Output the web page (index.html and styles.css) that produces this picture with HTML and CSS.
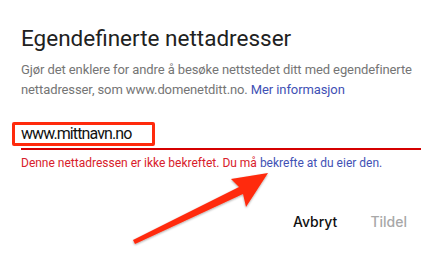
FILE: index.html
```html
<!DOCTYPE html>
<html>
	<head>
		<meta charset="UTF-8">
		<title>Egendefinerte nettadresser</title>
		<link rel="stylesheet" href="styles.css">
	</head>
	<body>
		<div class="dialog">
			<h1 class="title">Egendefinerte nettadresser</h1>
			<p class="desc">Gjør det enklere for andre å besøke nettstedet ditt med egendefinerte nettadresser, som www.domenetditt.no. <a href="#">Mer informasjon</a></p>
			<div class="field">
				<div class="value">www.mittnavn.no</div>
				<div class="mark"></div>
			</div>
			<div class="error">Denne nettadressen er ikke bekreftet. Du må <a href="#">bekrefte at du eier den.</a></div>
			<div class="actions">
				<span class="btn">Avbryt</span>
				<span class="btn off">Tildel</span>
			</div>
			<svg class="arrow" width="442" height="255" viewBox="0 0 442 255">
				<defs>
					<filter id="sh" x="-20%" y="-20%" width="140%" height="140%">
						<feDropShadow dx="0" dy="1" stdDeviation="1.2" flood-color="#000" flood-opacity="0.35"/>
					</filter>
				</defs>
				<path filter="url(#sh)" fill="#ff2a0c" d="M268 173 L231 179 L239 187 L133 240 L135 244 L243 194 L246 207 Z"/>
			</svg>
		</div>
	</body>
</html>
```

FILE: styles.css
```css
*{margin: 0;padding: 0;box-sizing: border-box;}
body{
	width: 442px;
	height: 255px;
	background: #fff;
	font-family: Roboto, "Liberation Sans", sans-serif;
	overflow: hidden;
}
.dialog{
	position: relative;
	width: 442px;
	height: 255px;
	padding: 24px 21px 0 21px;
}
.title{
	font-size: 22.5px;
	font-weight: 400;
	color: #212121;
	line-height: 28px;
}
.desc{
	margin-top: 8px;
	font-size: 13px;
	line-height: 20px;
	color: #757575;
	letter-spacing: -0.1px;
}
.desc a,.error a{
	color: #3f51b5;
	text-decoration: none;
}
.field{
	position: relative;
	margin-top: 21px;
	border-bottom: 2px solid #d50000;
	height: 29px;
}
.value{
	font-size: 16px;
	line-height: 24px;
	color: #111;
	padding-top: 1px;
	letter-spacing: -0.9px;
}
.mark{
	position: absolute;
	left: -9px;
	top: 1px;
	width: 143px;
	height: 24px;
	border: 3px solid #ff2a0c;
	border-radius: 2px;
}
.error{
	margin-top: 5px;
	font-size: 12px;
	line-height: 16px;
	color: #d8202a;
}
.actions{
	display: flex;
	justify-content: flex-end;
	gap: 33px;
	margin-top: 42px;
	padding-right: 14px;
	font-family: Inter, Roboto, sans-serif;
	font-size: 14px;
	font-weight: 500;
}
.btn{color: #111;}
.btn.off{color: #a8a8a8;}
.arrow{
	position: absolute;
	left: 0;
	top: 0;
}
```
